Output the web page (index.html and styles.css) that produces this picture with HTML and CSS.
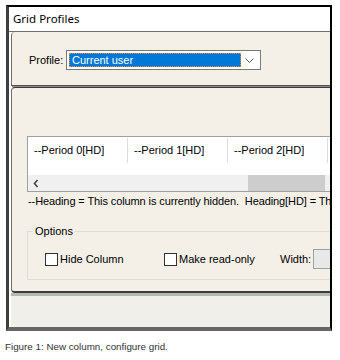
FILE: index.html
```html
<!DOCTYPE html>
<html>
<head>
<meta charset="utf-8">
<title>Grid Profiles</title>
<link rel="stylesheet" href="styles.css">
</head>
<body>
<div class="window">
  <div class="titlebar">Grid Profiles</div>
  <div class="panel panel-top">
    <div class="profile-row">
      <span class="label">Profile:</span>
      <div class="select">
        <span class="select-value">Current user</span>
        <span class="select-arrow"><svg width="9" height="5" viewBox="0 0 9 5"><path d="M0.5 0.5 L4.5 4.5 L8.5 0.5" fill="none" stroke="#606060" stroke-width="1"/></svg></span>
      </div>
    </div>
  </div>
  <div class="divider"></div>
  <div class="panel panel-main">
    <div class="grid">
      <div class="grid-head">
        <div class="cell">--Period 0[HD]</div>
        <div class="cell">--Period 1[HD]</div>
        <div class="cell">--Period 2[HD]</div>
        <div class="cell"></div>
      </div>
      <div class="hscroll">
        <span class="scroll-arrow"><svg width="6" height="9" viewBox="0 0 6 9"><path d="M4.5 1 L1.5 4.5 L4.5 8" fill="none" stroke="#444" stroke-width="1.6"/></svg></span>
        <span class="thumb"></span>
      </div>
    </div>
    <div class="note">--Heading = This column is currently hidden.&nbsp; Heading[HD] = This column is read-only.</div>
    <fieldset class="options">
      <legend>Options</legend>
      <div class="options-row">
        <label class="check"><span class="box"></span>Hide Column</label>
        <label class="check"><span class="box"></span>Make read-only</label>
        <span class="width-label">Width:</span>
        <span class="width-input"></span>
      </div>
    </fieldset>
  </div>
  <div class="footer-band"></div>
</div>
<p class="caption">Figure 1: New column, configure grid.</p>
</body>
</html>
```

FILE: styles.css
```css
html, body {
  margin: 0;
  padding: 0;
  background: #ffffff;
}
body {
  padding-top: 5px;
  font-family: "Liberation Sans", Arial, sans-serif;
}
.window {
  margin-left: 6px;
  width: 321px;
  border-top: 2px solid #000;
  border-right: 2px solid #000;
  border-left: 3px solid #3e3e3e;
  border-bottom: 4px solid #666666;
  overflow: hidden;
  background: #fff;
}
.titlebar {
  height: 24px;
  line-height: 24px;
  padding-left: 4px;
  font-family: "Noto Sans", "Open Sans", sans-serif;
  font-size: 11.5px;
  color: #000;
  background: #fff;
  border-bottom: 1px solid #707070;
}
.panel {
  margin-left: 2px;
  border-left: 1px solid #707070;
  background: #f4f0e8;
  overflow: hidden;
  white-space: nowrap;
}
.panel-top {
  border-top-left-radius: 4px;
  padding: 18px 0 15px 17px;
  border-bottom: 1px solid #505050;
  height: 20px;
}
.divider {
  height: 1px;
  margin-left: 3px;
  background: #8c8c8c;
}
.profile-row {
  display: flex;
  align-items: center;
  height: 20px;
}
.label {
  font-size: 11px;
  color: #000;
  width: 37px;
}
.select {
  display: flex;
  align-items: center;
  box-sizing: border-box;
  width: 195px;
  height: 20px;
  padding: 2px;
  border: 1px solid #7a7a7a;
  background: #fff;
}
.select-value {
  box-sizing: border-box;
  width: 172px;
  height: 14px;
  line-height: 12px;
  padding-left: 2px;
  background: #0078d7;
  border: 1px dotted #f08a24;
  color: #fff;
  font-size: 11px;
}
.select-arrow {
  flex: 1;
  display: flex;
  justify-content: center;
  align-items: center;
}
.select-arrow svg {
  display: block;
}
.panel-main {
  border-top: 1px solid #3a3a3a;
  border-top-left-radius: 4px;
  border-bottom-left-radius: 4px;
  border-bottom: 2px solid #3c3c3c;
  padding: 48px 0 11px 15px;
}
.grid {
  width: 340px;
  border: 1px solid #a0a0a0;
  border-right: none;
  background: #fff;
}
.grid-head {
  display: flex;
  height: 38px;
}
.cell {
  box-sizing: border-box;
  flex: none;
  width: 100px;
  height: 25px;
  margin-top: 1px;
  line-height: 25px;
  padding-left: 6px;
  border-right: 1px solid #dedede;
  font-size: 11px;
  color: #000;
}
.hscroll {
  display: flex;
  height: 16px;
  background: #f0f0f0;
}
.scroll-arrow {
  width: 16px;
  display: flex;
  align-items: center;
  justify-content: center;
}
.scroll-arrow svg {
  display: block;
}
.thumb {
  margin-left: 204px;
  width: 77px;
  height: 16px;
  background: #cdcdcd;
}
.note {
  margin-top: 3px;
  margin-left: 1px;
  line-height: 13px;
  font-size: 11px;
  letter-spacing: -0.1px;
  color: #000;
}
.options {
  margin: 17px 0 0 0;
  padding: 11px 0 10px 5px;
  width: 340px;
  border: 1px solid #dcdcdc;
  border-right: none;
}
.options legend {
  padding: 0 2px;
  line-height: 13px;
  font-size: 11px;
  color: #000;
}
.options-row {
  display: grid;
  grid-template-columns: 119px 116px 33px 40px;
  align-items: center;
  height: 20px;
  margin-left: 12px;
  font-size: 11px;
  color: #000;
}
.check {
  display: flex;
  align-items: center;
  gap: 2px;
}
.box {
  box-sizing: border-box;
  width: 13px;
  height: 13px;
  border: 1px solid #333;
  background: #fff;
}
.width-label {
  color: #000;
}
.width-input {
  box-sizing: border-box;
  height: 20px;
  width: 40px;
  border: 1px solid #a0a0a0;
  background: #e8e8e8;
}
.footer-band {
  height: 31px;
  margin-left: 2px;
  border-top: 3px solid #b2bab2;
  background: #f0efea;
}
.caption {
  margin: 10px 0 0 5px;
  font-family: "Liberation Sans", Arial, sans-serif;
  font-size: 9.8px;
  line-height: 12px;
  color: #333;
}
```
